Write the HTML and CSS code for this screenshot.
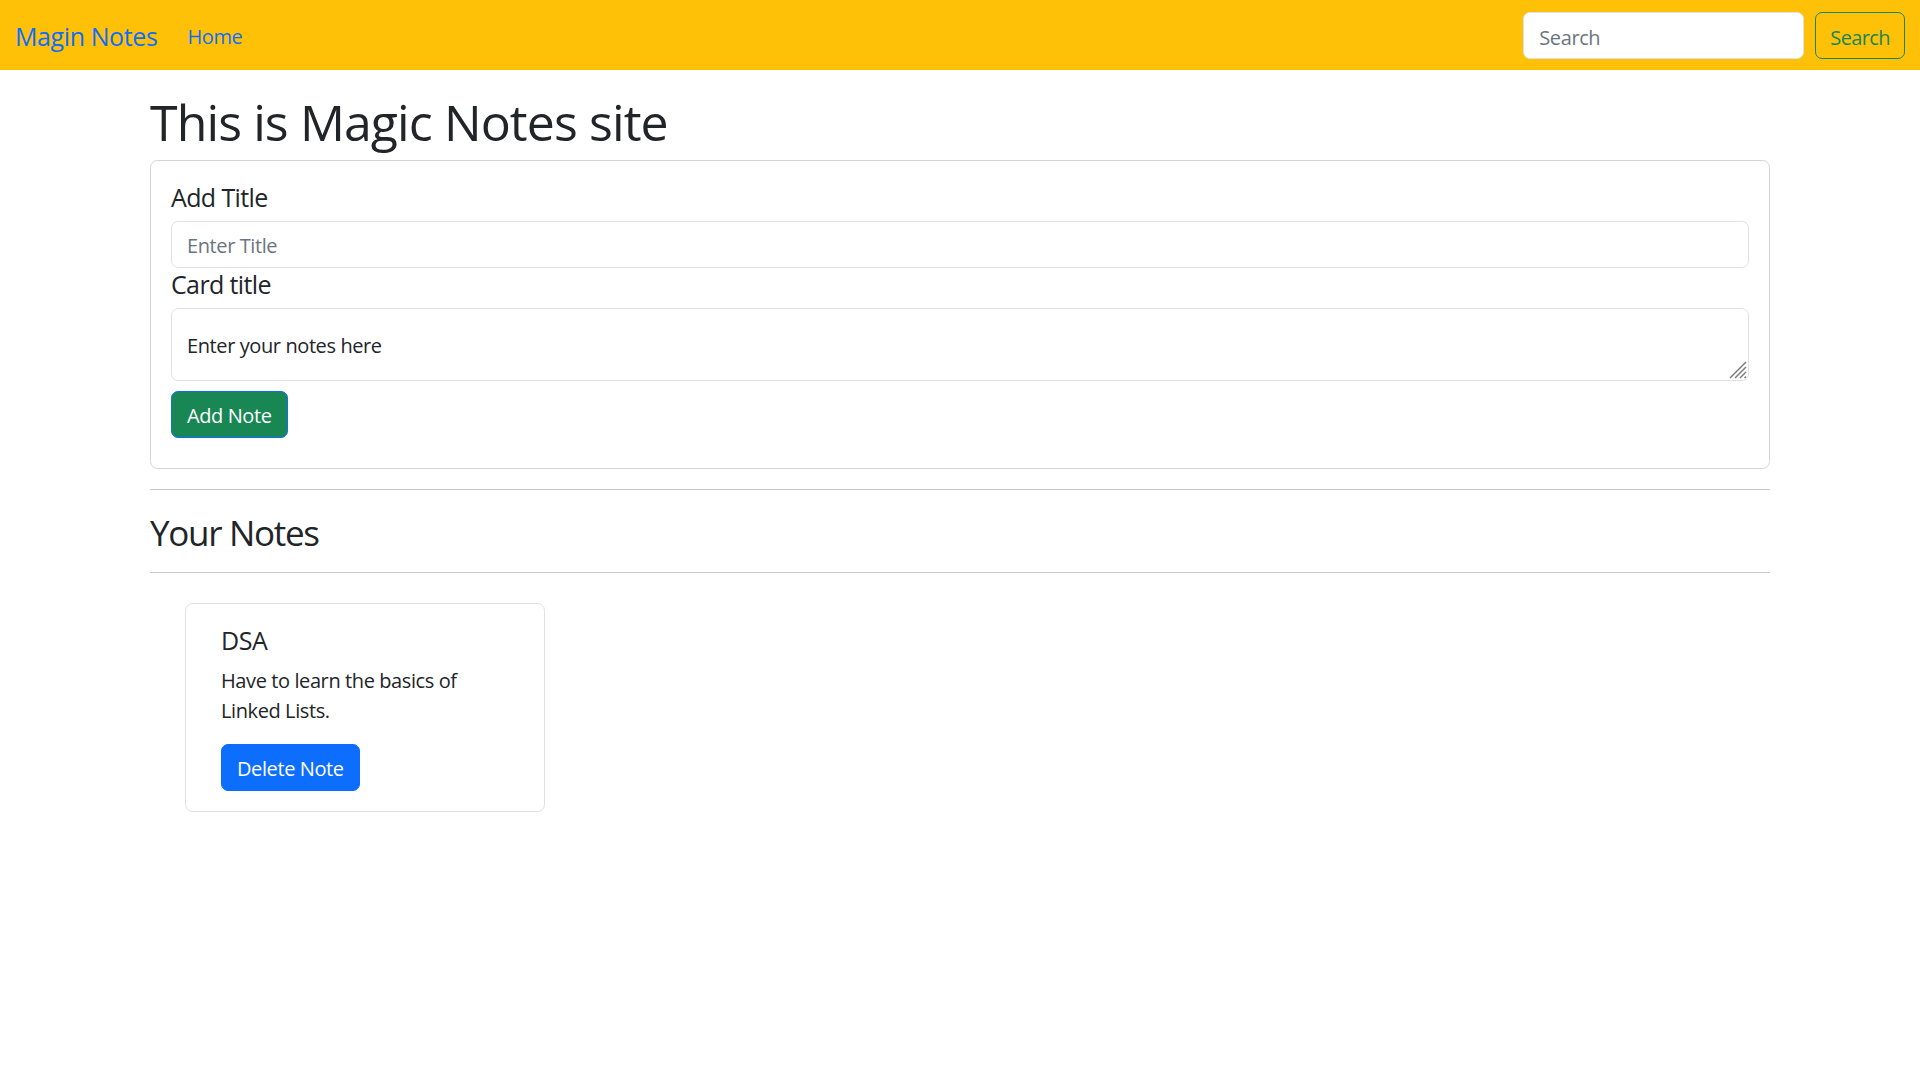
FILE: index.html
```html
<!DOCTYPE html>
<html lang="en">
<head>
<meta charset="utf-8">
<title>Magic Notes</title>
<link rel="stylesheet" href="styles.css">
</head>
<body>
<nav class="navbar">
  <div class="nav-left">
    <a class="brand" href="#">Magin Notes</a>
    <a class="nav-link" href="#">Home</a>
  </div>
  <form class="search-form">
    <input class="search-input" type="search" placeholder="Search">
    <button class="btn btn-outline-success" type="button">Search</button>
  </form>
</nav>

<main class="container">
  <h1 class="page-title">This is Magic Notes site</h1>
  <div class="card">
    <div class="card-body">
      <h5 class="field-title">Add Title</h5>
      <input class="form-control" type="text" placeholder="Enter Title">
      <h5 class="field-title">Card title</h5>
      <div class="notes-wrap">
        <textarea class="form-control notes-area">Enter your notes here</textarea>
        <svg class="grip" width="18" height="18" viewBox="0 0 18 18" aria-hidden="true">
          <line x1="1" y1="17" x2="17" y2="1" />
          <line x1="6" y1="17" x2="17" y2="6" />
          <line x1="11" y1="17" x2="17" y2="11" />
          <line x1="15.5" y1="17" x2="17" y2="15.5" />
        </svg>
      </div>
      <button class="btn btn-add" type="button">Add Note</button>
    </div>
  </div>
  <hr class="divider">
  <h3 class="section-title">Your Notes</h3>
  <hr class="divider">
  <div class="notes-row">
    <div class="note-card">
      <div class="note-body">
        <h5 class="note-title">DSA</h5>
        <p class="note-text">Have to learn the basics of Linked Lists.</p>
        <button class="btn btn-primary" type="button">Delete Note</button>
      </div>
    </div>
  </div>
</main>
</body>
</html>
```

FILE: styles.css
```css
* {
  box-sizing: border-box;
}

html, body {
  margin: 0;
  padding: 0;
}

body {
  font-family: "Open Sans", "Noto Sans", sans-serif;
  font-size: 20px;
  line-height: 1.5;
  color: #212529;
  background: #ffffff;
  letter-spacing: -0.02em;
}

/* Navbar */
.navbar {
  display: flex;
  align-items: center;
  justify-content: space-between;
  height: 70px;
  padding: 10px 15px;
  background: #ffc107;
}

.nav-left {
  display: flex;
  align-items: center;
}

.brand {
  font-size: 25px;
  line-height: 37.5px;
  padding: 8px 0 4.5px;
  margin-right: 20px;
  color: #0d6efd;
  text-decoration: none;
}

.nav-link {
  font-size: 20px;
  line-height: 30px;
  padding: 12px 10px 8px;
  color: #0d6efd;
  text-decoration: none;
}

.search-form {
  display: flex;
  align-items: center;
  margin: 0;
}

.search-input {
  width: 281px;
  height: 47px;
  margin-right: 11px;
  padding: 9.5px 15px 5.5px;
  font-family: inherit;
  font-size: 20px;
  letter-spacing: inherit;
  color: #212529;
  background: #ffffff;
  border: 1px solid #dee2e6;
  border-radius: 7px;
  outline: none;
}

.search-input::placeholder,
.form-control::placeholder {
  color: #6c757d;
  opacity: 1;
}

/* Buttons */
.btn {
  display: inline-block;
  height: 47px;
  padding: 9px 15px 6px;
  font-family: inherit;
  font-size: 20px;
  line-height: 30px;
  letter-spacing: inherit;
  border: 1px solid transparent;
  border-radius: 7px;
  cursor: pointer;
}

.btn-outline-success {
  padding: 10px 14px 5px;
  letter-spacing: -0.03em;
  color: #198754;
  background: transparent;
  border-color: #198754;
}

.btn-add {
  margin: 10px 0;
  color: #ffffff;
  background: #198754;
  border-color: #0d6efd;
}

.btn-primary {
  color: #ffffff;
  background: #0d6efd;
  border-color: #0d6efd;
}

/* Main content */
.container {
  width: 1650px;
  margin: 0 auto;
  padding: 20px 15px 0;
}

.page-title {
  margin: 0 0 8px;
  padding-top: 2px;
  font-size: 50px;
  line-height: 60px;
  font-weight: 400;
  letter-spacing: -0.018em;
}

.card {
  border: 1px solid #d3d4d5;
  border-radius: 7.5px;
  background: #ffffff;
}

.card-body {
  padding: 20px;
}

.field-title {
  margin: 0 0 9px;
  padding-top: 1px;
  font-size: 25px;
  line-height: 30px;
  font-weight: 400;
  letter-spacing: -0.025em;
}

.form-control {
  display: block;
  width: 100%;
  height: 47px;
  padding: 8.5px 15px 6.5px;
  font-family: inherit;
  font-size: 20px;
  line-height: 30px;
  letter-spacing: inherit;
  color: #212529;
  background: #ffffff;
  border: 1px solid #dee2e6;
  border-radius: 7px;
  outline: none;
}

.notes-wrap {
  position: relative;
}

.notes-area {
  height: 73px;
  padding-top: 22px;
  padding-bottom: 19px;
  resize: none;
}

.grip {
  position: absolute;
  right: 2px;
  bottom: 2px;
  pointer-events: none;
}

.grip line {
  stroke: #7a7a7a;
  stroke-width: 1.4;
}

.divider {
  margin: 20px 0;
  border: 0;
  border-top: 1px solid #c8c9ca;
}

.section-title {
  margin: 0 0 8px;
  padding-top: 4px;
  font-size: 35px;
  line-height: 38px;
  font-weight: 400;
  letter-spacing: -0.037em;
}

.notes-row {
  display: flex;
  flex-wrap: wrap;
}

.note-card {
  width: 360px;
  margin: 10px 0 0 35px;
  border: 1px solid #dfe0e1;
  border-radius: 7.5px;
  background: #ffffff;
}

.note-body {
  padding: 20px 35px;
}

.note-title {
  margin: 0 0 9px;
  padding-top: 1px;
  font-size: 25px;
  line-height: 30px;
  font-weight: 400;
}

.note-text {
  margin: 0 0 18px;
  padding-top: 2px;
}
```
